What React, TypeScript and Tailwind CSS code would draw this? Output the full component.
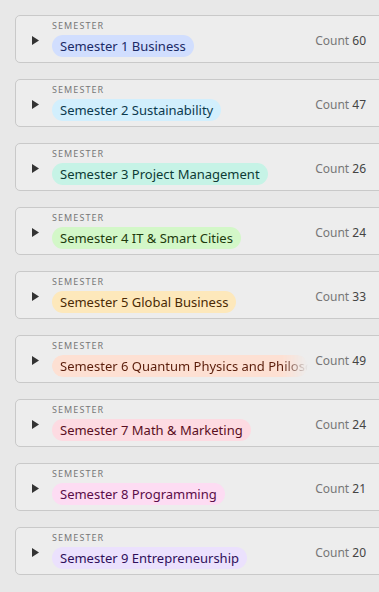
import React from "react";

const semesters = [
  { n: 1, name: "Business", count: 60, bg: "bg-[#d1defe]", fg: "text-[#1b2a66]" },
  { n: 2, name: "Sustainability", count: 47, bg: "bg-[#d2effd]", fg: "text-[#0c3a4e]" },
  { n: 3, name: "Project Management", count: 26, bg: "bg-[#c6f3e6]", fg: "text-[#0d3b35]" },
  { n: 4, name: "IT & Smart Cities", count: 24, bg: "bg-[#d3f7c8]", fg: "text-[#1d3a0c]" },
  { n: 5, name: "Global Business", count: 33, bg: "bg-[#fde8bb]", fg: "text-[#4a2a05]" },
  { n: 6, name: "Quantum Physics and Philosophy", count: 49, bg: "bg-[#fde0d3]", fg: "text-[#5a1d0a]", long: true },
  { n: 7, name: "Math & Marketing", count: 24, bg: "bg-[#fddbe2]", fg: "text-[#5a0f22]" },
  { n: 8, name: "Programming", count: 21, bg: "bg-[#fddcf3]", fg: "text-[#5a0d48]" },
  { n: 9, name: "Entrepreneurship", count: 20, bg: "bg-[#ebe1fd]", fg: "text-[#2e0f5a]" },
];

export default function App() {
  return (
    <div className="min-h-[592px] bg-[#e8e8e8] overflow-hidden pl-[15px] pt-[15px] font-['Noto_Sans',sans-serif]">
      <div className="flex flex-col gap-4 w-[380px]">
        {semesters.map((s) => (
          <div
            key={s.n}
            className="h-12 flex items-center rounded-[5px] border border-[#c9c9c9] bg-[#ededed] pl-4 pr-[28px]"
          >
            {/* Expand toggle */}
            <svg width="7" height="9" viewBox="0 0 7 9" className="shrink-0 mt-[2px]">
              <path d="M0 0 L7 4.5 L0 9 Z" fill="#333" />
            </svg>
            <div className="flex flex-col ml-[13px] min-w-0 flex-1">
              <span className="text-[9px] leading-[10px] tracking-[0.12em] text-[#777] uppercase mt-[-1px]">
                Semester
              </span>
              <div className="flex mt-[4px]">
                <span
                  className={`${s.bg} ${s.fg} rounded-full h-[22px] px-2 text-[13px] leading-[22px] whitespace-nowrap overflow-hidden max-w-[258px] ${
                    s.long ? "[mask-image:linear-gradient(to_right,black_90%,transparent)]" : ""
                  }`}
                >
                  Semester {s.n} {s.name}
                </span>
              </div>
            </div>
            <div className="shrink-0 ml-[7px] mt-[3px] text-[12px] text-[#777] whitespace-nowrap">
              Count <span className="text-[#444]">{s.count}</span>
            </div>
          </div>
        ))}
      </div>
    </div>
  );
}
